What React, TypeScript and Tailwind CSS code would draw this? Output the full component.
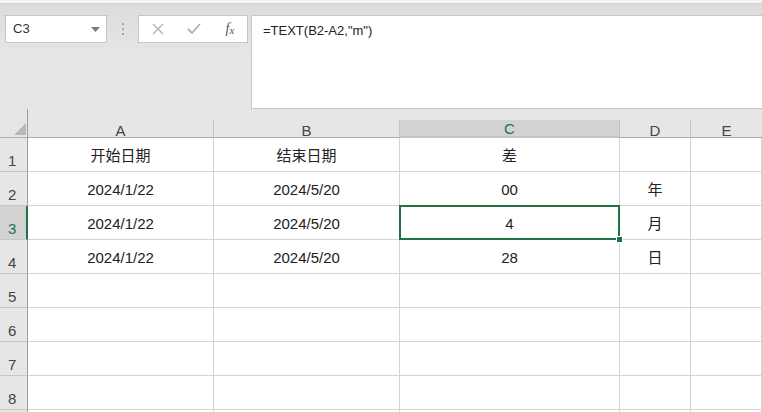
import React from "react";

const cols = ["A", "B", "C", "D", "E"];
const data: string[][] = [
  ["开始日期", "结束日期", "差", "", ""],
  ["2024/1/22", "2024/5/20", "00", "年", ""],
  ["2024/1/22", "2024/5/20", "4", "月", ""],
  ["2024/1/22", "2024/5/20", "28", "日", ""],
  ["", "", "", "", ""],
  ["", "", "", "", ""],
  ["", "", "", "", ""],
  ["", "", "", "", ""],
  ["", "", "", "", ""],
];

export default function App() {
  return (
    <div
      className="w-[762px] h-[412px] overflow-hidden bg-[#e6e6e6] text-[#222]"
      style={{ fontFamily: '"Liberation Sans", "Noto Sans CJK SC", sans-serif' }}
    >
      {/* top strip */}
      <div className="h-[4px] bg-[#f4f4f4] border-b border-[#d6d6d6]" />
      {/* formula bar */}
      <div className="h-[105px] bg-gradient-to-b from-[#dcdcdc] via-[#e6e6e6] to-[#e6e6e6] flex items-start pt-[11px] pl-[5px]">
        <div className="w-[102px] h-[28px] bg-white border border-[#c6c6c6] flex items-center justify-between pl-[7px] pr-[6px] text-[13px] text-[#333]">
          <span>C3</span>
          <svg width="9" height="5" viewBox="0 0 9 5">
            <polygon points="0,0 9,0 4.5,5" fill="#7b7b7b" />
          </svg>
        </div>
        <div className="w-[31px] h-[28px] flex flex-col items-center justify-center gap-[3px]">
          <div className="w-[2px] h-[2px] bg-[#a8a8a8]" />
          <div className="w-[2px] h-[2px] bg-[#a8a8a8]" />
          <div className="w-[2px] h-[2px] bg-[#a8a8a8]" />
        </div>
        <div className="w-[110px] h-[28px] bg-white border border-[#c6c6c6] flex items-center">
          <div className="w-[36px] flex justify-center pl-[1px]">
            <svg width="12" height="12" viewBox="0 0 12 12">
              <path d="M1 1 L11 11 M11 1 L1 11" stroke="#b0b0b0" strokeWidth="1.3" fill="none" />
            </svg>
          </div>
          <div className="w-[38px] flex justify-center">
            <svg width="14" height="12" viewBox="0 0 14 12">
              <path d="M1 6 L5 10 L13 1" stroke="#b0b0b0" strokeWidth="1.8" fill="none" />
            </svg>
          </div>
          <div
            className="flex-1 flex justify-center text-[#555] italic text-[14px] leading-none"
            style={{ fontFamily: '"Liberation Serif", serif' }}
          >
            <span>f</span>
            <span className="text-[11px] mt-[3px]">x</span>
          </div>
        </div>
        <div className="ml-[3px] flex-1 h-[94px] bg-white border border-r-0 border-[#c6c6c6] pl-[11px] pt-[5px] text-[13px] text-[#222]">
          =TEXT(B2-A2,"m")
        </div>
      </div>
      {/* column header */}
      <div className="grid grid-cols-[28px_186px_186px_220px_71px_71px] h-[29px] border-b border-[#ababab]">
        <div className="relative border-r border-[#9e9e9e]">
          <svg className="absolute left-[14px] top-[14px]" width="12" height="12" viewBox="0 0 12 12">
            <polygon points="12,0 12,12 0,12" fill="#b8b8b8" />
          </svg>
        </div>
        {cols.map((c, i) => {
          const sel = c === "C";
          return (
            <div key={c} className="flex flex-col">
              <div className="h-[11px]" />
              <div
                className={
                  "flex-1 flex items-center justify-center text-[15px] leading-none " +
                  (sel
                    ? "bg-[#d2d2d2] text-[#217346] border-b-2 border-[#217346] pt-[1px]"
                    : "text-[#444] pt-[2px]") +
                  (i < cols.length - 1 ? " border-r border-[#c4c4c4]" : "")
                }
              >
                {c}
              </div>
            </div>
          );
        })}
      </div>
      {/* rows */}
      <div className="grid grid-cols-[28px_186px_186px_220px_71px_71px] auto-rows-[34px]">
        {data.map((row, r) => (
          <React.Fragment key={r}>
            <div
              className={
                "flex items-end pl-[8px] pb-[1px] text-[15px] leading-[18px] border-b border-[#c8c8c8] " +
                (r === 2
                  ? "bg-[#d2d2d2] text-[#217346] border-r-2 border-r-[#217346]"
                  : "bg-[#e6e6e6] text-[#444] border-r border-r-[#9e9e9e]")
              }
            >
              {r < 8 ? r + 1 : ""}
            </div>
            {row.map((v, c) => {
              const sel = r === 2 && c === 2;
              return (
                <div
                  key={c}
                  className={
                    "relative bg-white border-r border-b border-[#d4d4d4] flex items-center justify-center text-[15px] text-[#222] pt-[3px]" +
                    (sel ? " z-10" : "")
                  }
                >
                  {v}
                  {sel && (
                    <>
                      <div className="absolute left-[-1px] top-[-1px] right-[-1px] bottom-[-1px] border-2 border-[#217346]" />
                      <div className="absolute right-[-4px] bottom-[-4px] w-[7px] h-[7px] bg-[#217346] border border-white" />
                    </>
                  )}
                </div>
              );
            })}
          </React.Fragment>
        ))}
      </div>
    </div>
  );
}
